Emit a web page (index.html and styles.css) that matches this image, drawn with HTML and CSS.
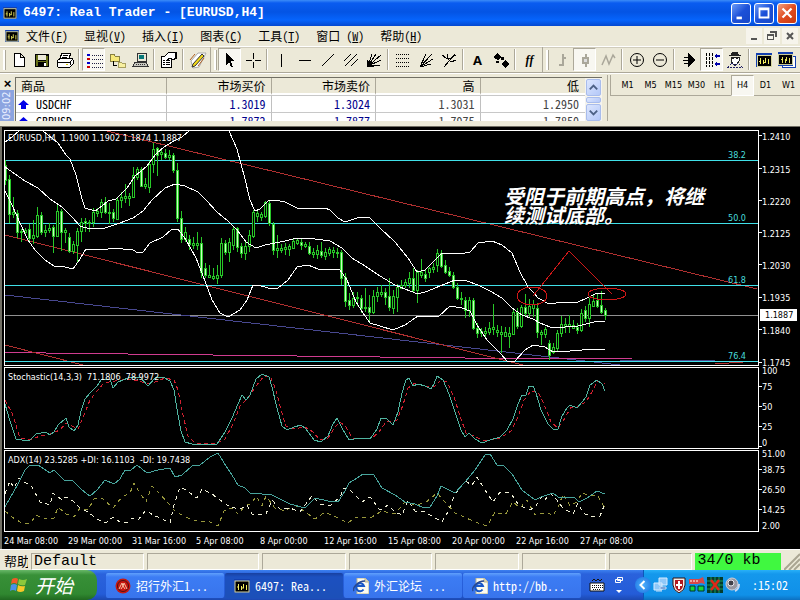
FILE: index.html
```html
<!DOCTYPE html>
<html lang="zh-CN">
<head>
<meta charset="utf-8">
<title>6497: Real Trader - [EURUSD,H4]</title>
<link rel="stylesheet" href="styles.css">
</head>
<body>
<svg class="defs" aria-hidden="true">
  <symbol id="app" viewBox="0 0 16 14"><rect width="16" height="14" fill="#1440b0"/><rect x="1" y="2" width="14" height="11" fill="#000" stroke="#d8d8a0"/><path d="M4.500 5v6M7.500 7v4M9.500 5v4M12.500 6v5M3 8h2M8 9h2" stroke="#f4f060" fill="none"/></symbol>
  <symbol id="ie" viewBox="0 0 16 16"><path d="M4 0h8l4 4v12H4z" fill="#fbfbf0" stroke="#b8b490"/><path d="M12 0v4h4" fill="#ddd8b8" stroke="#b8b490"/><path d="M10.500 11.500A4 4 0 1 1 11 8H4" fill="none" stroke="#1858c8" stroke-width="2"/><path d="M1 13C-1 10 5 3 12 3" fill="none" stroke="#284890" stroke-width="1.500"/></symbol>
</svg>

<header class="titlebar">
  <svg class="appicon"><use href="#app"/></svg>
  <h1>6497: Real Trader - [EURUSD,H4]</h1>
  <button class="winbtn" aria-label="最小化"><svg viewBox="0 0 20 20"><path d="M5 14h6v3H5z" fill="#fff"/></svg></button>
  <button class="winbtn" aria-label="最大化"><svg viewBox="0 0 20 20"><path d="M4 4h12v12H4zM6 7v7h8V7z" fill="#fff" fill-rule="evenodd"/></svg></button>
  <button class="winbtn close" aria-label="关闭"><svg viewBox="0 0 20 20"><path d="M5 5l10 10M15 5L5 15" stroke="#fff" stroke-width="2.500"/></svg></button>
</header>

<nav class="menubar">
  <svg class="appicon"><use href="#app"/></svg>
  <button>文件(<u>F</u>)</button><button>显视(<u>V</u>)</button><button>插入(<u>I</u>)</button><button>图表(<u>C</u>)</button><button>工具(<u>T</u>)</button><button>窗口 (<u>W</u>)</button><button>帮助(<u>H</u>)</button>
  <span class="spring"></span>
  <button class="mdi" aria-label="最小化图表"><svg viewBox="0 0 16 16"><path d="M5 10h6v2H5z" fill="#555"/></svg></button>
  <button class="mdi" aria-label="还原图表"><svg viewBox="0 0 16 16"><path d="M6 3h7v6h-2V5H6zM3 6h7v6H3zM4 8v3h5V8z" fill="#555" fill-rule="evenodd"/></svg></button>
  <button class="mdi" aria-label="关闭图表"><svg viewBox="0 0 16 16"><path d="M5 5l6 6M11 5l-6 6" stroke="#555" stroke-width="2"/></svg></button>
</nav>

<div class="toolbar">
  <div class="group">
    <button aria-label="新建"><svg viewBox="0 0 18 18"><path d="M4.500 2.500h6l4 4v9h-10zM10.500 2.500v4h4" fill="#fff" stroke="#000"/></svg></button>
    <button aria-label="保存"><svg viewBox="0 0 18 18"><path d="M2 3h14v13H2z" fill="#000"/><path d="M3 4h2v11H3zM13 5h2v10h-2z" fill="#667018"/><path d="M5 4h8v5H5z" fill="#ece9d8"/><path d="M5 10h8v1H5z" fill="#667018"/><path d="M11 12h2v3h-2z" fill="#fff"/></svg></button>
    <button aria-label="打印"><svg viewBox="0 0 18 18"><path d="M6 2h9l-2 5H4zM1 10l4-3h11l1 2v4l-3 3H2l-1-2z" fill="#fff" stroke="#000"/><path d="M7 4h5M6 6h5M1 11h13v3M14 11l3-3" fill="none" stroke="#000"/><path d="M10 13h2v1h-2z" fill="#d0c000"/></svg></button>
    <i class="sep"></i>
    <button class="on" aria-label="市场报价"><svg viewBox="0 0 18 18"><path d="M7 4.500h11M7 8.500h11M7 12.500h11M7 16.500h11" stroke="#224" stroke-dasharray="1 1"/><path d="M2 3h3v2H2zM2 11h3v2H2z" fill="#00c"/><path d="M2 7h3v2H2zM2 15h3v2H2z" fill="#c00"/></svg></button>
    <button aria-label="导航"><svg viewBox="0 0 18 18"><path d="M2 3h4l1 2h4v5H2z" fill="#f6e878" stroke="#888040"/><path d="M10 11h3l1 1h3v4h-7z" fill="#f8f0a0" stroke="#a8a060"/><path d="M5 10v4h4" stroke="#000" fill="none"/></svg></button>
    <button aria-label="终端"><svg viewBox="0 0 18 18"><path d="M6 2h9v8H6z" fill="#ece9d8" stroke="#333"/><path d="M8 4h5v4H8z" fill="#087878"/><path d="M4 11h11l2 4H2z" fill="#c8c8c0" stroke="#333"/><path d="M5 13h9" stroke="#333" stroke-dasharray="1 1"/></svg></button>
    <i class="sep"></i>
    <button aria-label="新订单"><svg viewBox="0 0 18 18"><path d="M1.500 5.500h10v11h-10z" fill="#fff" stroke="#000"/><path d="M3 9h2M6 9h4M3 11h2M6 11h4M3 13h2M6 13h4" stroke="#000"/><path d="M5 5l4-4h3l4 1v5l-3 2-3-2-3 2" fill="#fff" stroke="#000"/><path d="M16 1v7" stroke="#000" stroke-width="2"/></svg></button>
    <i class="sep"></i>
    <button aria-label="编辑器"><svg viewBox="0 0 18 18" class="smooth"><path d="M2 10L9 2h8l-7 14-6 1z" fill="#fff" stroke="#aaa"/><path d="M4 13l9-10 2 2-9 10-3 1z" fill="#f0d818" stroke="#333"/><path d="M9 15l6-8M1 9l5-6" stroke="#b06020"/></svg></button>
  </div>
  <div class="group">
    <button class="on" aria-label="光标"><svg viewBox="0 0 18 18"><path d="M5 2v12l3-3 2 5h2l-2-6h4z" fill="#000"/></svg></button>
    <button aria-label="十字线"><svg viewBox="0 0 18 18"><path d="M9.500 2v6M9.500 11v6M2 9.500h6M11 9.500h6" stroke="#000"/></svg></button>
    <i class="sep"></i>
    <button aria-label="垂直线"><svg viewBox="0 0 18 18"><path d="M8.500 3v13" stroke="#000"/></svg></button>
    <button aria-label="水平线"><svg viewBox="0 0 18 18"><path d="M3 9.500h12" stroke="#000"/></svg></button>
    <button aria-label="趋势线"><svg viewBox="0 0 18 18"><path d="M3 15L15 3" stroke="#000"/></svg></button>
    <button aria-label="通道"><svg viewBox="0 0 18 18"><path d="M2 10l7-7M3 15L15 3M9 15l7-7" stroke="#000"/></svg></button>
    <button aria-label="扇形线"><svg viewBox="0 0 18 18"><path d="M3 15L7 3M3 15l8-12M3 15L16 4M3 15l13-6M3 15l12-1" stroke="#000"/><path d="M2 9v7h7z" fill="#000"/></svg></button>
    <i class="sep"></i>
    <button aria-label="斐波纳契"><svg viewBox="0 0 18 18"><path d="M2 3.500h14M2 7.500h14M2 11.500h14M2 15.500h14" stroke="#000" stroke-dasharray="1 1"/></svg></button>
    <button aria-label="斐波扇"><svg viewBox="0 0 18 18"><path d="M3 16L9 3M3 16L15 3M3 16l13-8M3 16l11-3" fill="none" stroke="#000"/></svg></button>
    <button aria-label="音叉线"><svg viewBox="0 0 18 18"><path d="M4 16L15 3M2 4l4 3 5 0 5-3M7 3l0 4 4 4 5-2" fill="none" stroke="#000"/></svg></button>
    <i class="sep"></i>
    <button class="letter">A</button>
    <button aria-label="箭头"><svg viewBox="0 0 18 18"><path d="M5 2l4 4-3 3-5-3zM13 9l4 4-4 4-4-4zM9 6h3v3H9zM4 10h3v2H4z" fill="#000"/></svg></button>
    <i class="sep"></i>
    <button class="func">ff</button>
  </div>
  <div class="group">
    <button aria-label="柱状图"><svg viewBox="0 0 18 18"><path d="M9.500 3v12M6 13.500h3M10 6.500h3" stroke="#aaa79a" stroke-width="2"/></svg></button>
    <button class="on" aria-label="蜡烛图"><svg viewBox="0 0 18 18"><path d="M9.500 3v13" stroke="#aaa79a" stroke-width="2"/><path d="M7 7h5v5H7z" fill="#ddd" stroke="#aaa79a" stroke-width="2"/></svg></button>
    <button aria-label="折线图"><svg viewBox="0 0 18 18" class="smooth"><path d="M3 14L7 5l3 8 4-9 2 3" fill="none" stroke="#aaa79a" stroke-width="1.500"/></svg></button>
    <i class="sep"></i>
    <button aria-label="放大"><svg viewBox="0 0 18 18" class="smooth"><circle cx="9" cy="9" r="6.500" fill="none" stroke="#000"/><path d="M5 9h8M9 5v8" stroke="#000"/></svg></button>
    <button aria-label="缩小"><svg viewBox="0 0 18 18" class="smooth"><circle cx="9" cy="9" r="6.500" fill="none" stroke="#000"/><path d="M5 9h8" stroke="#000"/></svg></button>
    <i class="sep"></i>
    <button aria-label="自动滚动"><svg viewBox="0 0 18 18"><path d="M8 2l7 7-7 7z" fill="#000"/><path d="M4 6.500h5M3 9.500h6M4 12.500h5" stroke="#000"/></svg></button>
    <button class="on" aria-label="图表平移"><svg viewBox="0 0 18 18"><path d="M3.500 2v14M6.500 2v14M9.500 2v14" stroke="#000" stroke-dasharray="3 1"/><path d="M11 5l3-3v2h3v2h-3v2zM11 13l3-3v2h3v2h-3v2z" fill="#00a"/></svg></button>
    <button aria-label="智能交易"><svg viewBox="0 0 18 18"><path d="M5 4l1-3h6l1 3h2v1H3V4z" fill="#222"/><path d="M5 6h8v4l-2 3H7l-2-3z" fill="#fff" stroke="#222"/><path d="M6 7h2M10 7h2" stroke="#222"/><path d="M2 16l4-4 3 3 3-3 4 4z" fill="none" stroke="#226" stroke-dasharray="2 1"/></svg></button>
    <i class="sep"></i>
    <button aria-label="新图表"><svg viewBox="0 0 18 18"><use href="#app" x="1" y="2" width="16" height="14"/></svg></button>
    <button aria-label="图表窗口"><svg viewBox="0 0 18 18"><path d="M4 5h13v11H4z" fill="#fff" stroke="#1440b0"/><use href="#app" x="0" y="1" width="15" height="14"/></svg></button>
  </div>
</div>

<section class="dock">
  <div class="grip-col"><button aria-label="关闭市场报价">×</button><span>09:02</span></div>
  <div class="quotes">
    <table>
      <colgroup><col class="c-name"><col><col><col><col></colgroup>
      <thead><tr><th>商品</th><th>市场买价</th><th>市场卖价</th><th>高</th><th>低</th></tr></thead>
      <tbody>
        <tr><td><svg class="up" viewBox="0 0 11 9"><path d="M5.500 0L11 5H8v4H3V5H0z"/></svg>USDCHF</td><td class="q">1.3019</td><td class="q">1.3024</td><td>1.3031</td><td>1.2950</td></tr>
        <tr><td><svg class="up" viewBox="0 0 11 9"><path d="M5.500 0L11 5H8v4H3V5H0z"/></svg>GBPUSD</td><td class="q">1.7872</td><td class="q">1.7877</td><td>1.7975</td><td>1.7850</td></tr>
      </tbody>
    </table>
  </div>
  <div class="scroll">
    <button aria-label="向上"><svg viewBox="0 0 14 14"><path d="M3 9l4-4 4 4" /></svg></button>
    <i></i>
    <button aria-label="向下"><svg viewBox="0 0 14 14"><path d="M3 5l4 4 4-4" /></svg></button>
  </div>
  <div class="periods">
    <div class="period-row"><button>M1</button><button>M5</button><button>M15</button><button>M30</button><button>H1</button><button class="on">H4</button><button>D1</button><button>W1</button></div>
  </div>
</section>

<main class="chart">
  <div class="pane price">
    <svg class="plot"><g transform="translate(-5 -131)" fill="none">
      <path d="M5 315.500H3000" stroke="#909090"/>
      <path d="M5 295L620 365M620 360.500H715" stroke="#484890"/>
      <path d="M5 352.500H46M46 353.500H128M128 354.500H213M213 355.500H297M297 356.500H380M380 357.500H465M465 358.500H632" stroke="#d03c90"/>
      <path d="M107 131L757 289M5 235L523 365M5 345L83 365M715 364L757 361" stroke="#b03030"/>
      <g class="fib"><rect x="5" y="160" width="3000" height="1"/><rect x="5" y="223" width="3000" height="1"/><rect x="5" y="285" width="3000" height="1"/><rect x="5" y="361" width="3000" height="1"/></g>
      <g id="candles" class="candles"></g>
      <g stroke="#fff">
        <polyline points="5,142 12,137 19,131"/>
        <polyline points="43,131 58,143 66,155 70,159 76,175 82,199 85,208 95,211 102,206 108,201 116,199 127,188 135,176 147,166 156,154 164,147 172,142 182,137 189,131"/>
        <polyline points="229,131 237,149 245,179 250,200 255,211 260,209 268,201 275,200 285,202 297,208 313,209 325,208 330,210 338,218 345,222 357,218 369,217 380,228 395,242 408,258 417,272 425,270 437,258 442,253 465,253 470,252 478,243 492,241 502,245 512,253 520,272 528,287 534,293 538,298 549,304 563,302 578,302 587,298 597,293 605,294"/>
        <polyline points="5,167 15,174 25,181 38,188 50,199 62,207 72,217 80,226 90,229 105,228 120,223 133,218 143,211 152,200 165,188 175,184 185,186 198,192 207,201 217,212 228,221 238,231 246,242 256,248 265,245 275,243 285,241 297,238 315,239 330,241 342,248 352,258 365,266 380,276 395,285 410,291 418,294 428,291 440,286 455,280 467,281 478,285 490,291 502,298 512,308 522,315 533,319 540,323 550,327 565,327 578,326 590,323 598,321 605,322"/>
        <polyline points="5,191 12,205 20,223 28,240 35,250 45,260 54,266 65,267 73,269 80,259 86,249 95,249 103,250 113,248 123,249 133,250 138,253 143,252 150,243 163,237 172,229 178,229 186,240 196,258 205,281 212,300 220,313 228,317 240,310 247,300 253,285 258,285 268,288 278,288 288,280 297,267 308,265 318,269 340,270 347,280 356,302 363,313 370,323 380,326 393,330 405,325 418,316 430,316 438,317 450,306 462,308 470,311 477,325 487,340 500,353 508,362 515,361 525,350 533,345 545,347 553,352 570,351 582,350 590,349 605,349"/>
      </g>
      <g stroke="#d01818"><ellipse cx="532" cy="296" rx="15" ry="9"/><ellipse cx="607" cy="294" rx="19" ry="6"/><path d="M533 296L569 251L612 294"/></g>
      <g class="lbl"><text x="8" y="141" xml:space="preserve">EURUSD,H4  1.1900 1.1902 1.1874 1.1887</text></g>
      <g class="lbl cyan"><text x="728" y="158">38.2</text><text x="728" y="221">50.0</text><text x="728" y="283">61.8</text><text x="728" y="359">76.4</text></g>
      <g class="note"><text x="504" y="204">受阻于前期高点<tspan class="mid">，</tspan>将继</text><text x="504" y="223">续测试底部<tspan class="mid">。</tspan></text></g>
    </g></svg>
    <svg class="axis"><path d="M0 5.500h3M0 38.500h3M0 70.500h3M0 102.500h3M0 134.500h3M0 167.500h3M0 199.500h3M0 232.500h3" stroke="#fff"/>
      <g class="lbl"><text x="3" y="10">1.2410</text><text x="3" y="43">1.2315</text><text x="3" y="75">1.2220</text><text x="3" y="107">1.2125</text><text x="3" y="139">1.2030</text><text x="3" y="171">1.1935</text><text x="3" y="204">1.1840</text><text x="3" y="236">1.1745</text></g>
      <rect x="1" y="179" width="37" height="12" fill="#fff"/><text class="tag" x="6" y="188">1.1887</text></svg>
  </div>
  <div class="pane">
    <svg class="plot"><g transform="translate(-5 -368)" fill="none">
      <polyline stroke="#d02030" stroke-dasharray="4 3" points="5,400 12,413 20,438 30,440 40,436 50,434 60,430 66,423 72,426 78,429 84,415 90,400 98,390 104,383 115,381 130,379 150,384 165,378 174,380 178,390 183,415 188,436 195,443 215,444 225,439 233,424 240,406 248,398 256,386 264,376 270,376 276,390 281,410 286,426 293,429 305,427 313,432 320,440 328,438 335,427 340,422 346,427 352,438 372,438 379,432 386,422 397,420 403,405 408,388 415,383 425,386 434,387 441,380 447,382 454,397 460,416 466,433 474,436 484,441 500,438 511,431 518,417 524,400 531,391 538,392 544,404 551,422 558,428 565,418 571,407 577,407 586,402 593,390 598,381 605,384"/>
      <polyline stroke="#50b4a0" points="5,404 10,421 16,439 22,440 30,440 36,434 46,432 50,435 54,432 58,425 66,418 69,427 74,431 78,425 81,411 85,399 90,393 97,386 101,380 110,379 113,388 118,382 128,378 140,377 148,386 155,378 163,377 170,381 174,390 177,409 181,431 185,442 192,444 217,444 225,432 232,418 238,404 242,395 246,400 250,395 256,379 262,374 269,377 272,387 277,408 282,426 287,430 294,427 301,425 306,429 314,440 321,442 328,436 333,424 337,418 342,428 349,440 360,438 370,439 377,429 381,418 387,419 393,425 398,412 402,393 406,380 409,378 413,386 418,384 425,386 431,389 434,384 437,376 443,380 449,394 455,412 461,430 465,437 469,433 475,439 482,443 490,440 500,437 507,430 513,419 518,404 522,395 526,395 529,386 533,386 536,393 541,410 548,424 554,430 558,429 562,416 567,408 570,405 577,408 582,402 586,397 590,385 597,380 602,384 605,391"/>
      <g class="lbl"><text x="8" y="380" xml:space="preserve">Stochastic(14,3,3)  71.1806  78.9972</text></g>
    </g></svg>
    <svg class="axis"><path d="M0 19.500h3M0 39.500h3M0 59.500h3M0 79.500h3" stroke="#fff"/><g class="lbl"><text x="3" y="7">100</text><text x="3" y="23">75</text><text x="3" y="43">50</text><text x="3" y="63">25</text><text x="3" y="79">0</text></g></svg>
  </div>
  <div class="pane">
    <svg class="plot"><g transform="translate(-5 -451)" fill="none">
      <polyline stroke="#98983c" stroke-dasharray="4 4" points="5,511 12,517 20,522 30,524 36,515 45,519 54,518 58,507 66,514 74,517 80,508 88,510 94,499 102,498 113,508 122,497 130,493 134,483 140,493 146,502 152,486 158,492 168,503 175,511 185,517 200,522 208,521 218,526 224,511 232,508 238,514 245,506 252,503 256,496 262,506 266,496 275,508 285,511 295,505 304,511 315,519 325,512 338,518 348,523 355,517 370,518 382,511 395,514 405,502 415,505 425,503 437,493 446,503 455,513 466,518 478,523 487,526 495,512 505,515 513,502 520,508 527,500 535,515 541,513 548,513 553,516 559,505 563,494 570,506 577,502 582,493 590,496 597,495 605,508"/>
      <polyline stroke="#f0f0d8" stroke-dasharray="4 4" points="5,494 10,481 14,488 19,478 26,483 31,485 40,502 50,505 53,493 62,500 66,497 73,501 80,508 88,512 97,519 106,523 113,517 120,522 127,523 132,518 138,520 146,510 153,515 160,518 170,523 174,505 180,487 186,490 197,498 202,489 212,494 220,500 230,507 240,509 247,505 252,514 258,514 266,514 272,500 280,509 290,508 300,512 312,496 320,504 330,506 340,497 344,488 350,490 362,502 370,497 380,510 388,505 395,512 402,515 408,500 415,511 425,512 435,518 442,522 449,510 455,494 465,481 472,485 477,477 485,490 493,502 500,492 510,492 518,504 528,510 535,508 541,497 545,500 550,493 557,500 563,508 573,514 578,503 583,513 590,516 600,516 604,506"/>
      <polyline stroke="#48a49c" points="5,507 10,498 18,484 25,470 30,465 38,465 50,473 54,470 64,480 73,481 82,490 90,496 97,490 105,480 114,484 120,479 125,470 130,471 137,465 147,473 158,470 170,468 175,477 182,475 192,466 200,465 210,457 218,453 226,466 232,475 238,485 245,488 250,493 262,494 270,494 278,498 290,504 305,508 315,498 328,501 338,502 345,491 349,483 357,478 363,474 374,475 382,488 395,495 405,502 415,504 424,508 430,507 437,496 441,486 455,493 465,482 475,470 485,455 490,454 497,465 503,465 512,474 522,490 535,500 541,497 547,495 553,493 558,497 570,497 575,498 579,502 587,498 597,491 605,494"/>
      <g class="lbl"><text x="8" y="463" xml:space="preserve">ADX(14) 23.5285 +DI: 16.1103  -DI: 19.7438</text></g>
    </g></svg>
    <svg class="axis"><path d="M0 19.500h3M0 39.500h3M0 59.500h3" stroke="#fff"/><g class="lbl"><text x="3" y="7">51.00</text><text x="3" y="23">38.75</text><text x="3" y="43">26.50</text><text x="3" y="63">14.25</text><text x="3" y="79">2.00</text></g></svg>
  </div>
  <ol class="dates"><li>24 Mar 08:00</li><li>29 Mar 00:00</li><li>31 Mar 16:00</li><li>5 Apr 08:00</li><li>8 Apr 00:00</li><li>12 Apr 16:00</li><li>15 Apr 08:00</li><li>20 Apr 00:00</li><li>22 Apr 16:00</li><li>27 Apr 08:00</li></ol>
</main>

<footer class="status">
  <span class="help">帮助</span><span class="cell wide">Default</span><span class="cell wide"></span><span class="cell"></span><span class="cell"></span><span class="cell"></span><span class="cell"></span><span class="cell"></span><span class="traffic">34/0 kb</span>
  <svg class="sizer" viewBox="0 0 16 18"><path d="M0 18L16 2M5 18L16 7M10 18l6-6" stroke="#aaa692" stroke-width="2"/></svg>
</footer>

<div class="taskbar">
  <button class="start"><svg viewBox="0 0 18 18"><path d="M2 3q4-2 6 0L7 8Q4 6 1 8z" fill="#f05a28"/><path d="M9 3q4 2 8 0l-2 6q-4 1-7-1z" fill="#8cc83c"/><path d="M1 9q3-2 6 0l-1 6q-3-2-6 0z" fill="#4a90e8"/><path d="M8 9q3 2 7 1l-1 5q-4 2-7 0z" fill="#f8c828"/></svg>开始</button>
  <button class="task"><svg viewBox="0 0 16 16"><circle cx="8" cy="8" r="7.500" fill="#c81810"/><circle cx="8" cy="8" r="5.500" fill="none" stroke="#501010"/><path d="M4 11l3-6 1 3 1-3 3 6M6 11l2-3 2 3" fill="none" stroke="#f8c0a0"/></svg>招行外汇1...</button>
  <button class="task active"><svg viewBox="0 0 16 16"><use href="#app" y="1" width="16" height="14"/></svg>6497: Rea...</button>
  <button class="task"><svg viewBox="0 0 16 16"><use href="#ie" width="16" height="16"/></svg>外汇论坛 ...</button>
  <button class="task"><svg viewBox="0 0 16 16"><use href="#ie" width="16" height="16"/></svg>http://bb...</button>
  <div class="lang">
    <svg viewBox="0 0 16 16"><path d="M1 6h14v8H1z" fill="#fff" stroke="#111"/><path d="M3 8.500h11M3 10.500h11M4 12.500h8" stroke="#111" stroke-dasharray="1 1"/><path d="M3 4l2-2 2 2 2-2 2 2 2-2" fill="none" stroke="#111"/></svg>
    <svg viewBox="0 0 10 18"><path d="M3.500 1.500h5v3h-5zM1.500 3.500h5v3h-5z" fill="#2a60d8" stroke="#fff"/><path d="M2 14h6l-3 3z" fill="#fff"/></svg>
  </div>
  <div class="tray">
    <button class="expand" aria-label="显示隐藏图标"><svg viewBox="0 0 16 16"><path d="M9.500 4l-4 4 4 4" fill="none" stroke="#fff" stroke-width="2"/></svg></button>
    <svg viewBox="0 0 16 16"><path d="M6 1h8v7H6zM1 6h8v7H1z" fill="#90c8f8" stroke="#d8ecff"/><path d="M7 10h6v2H7zM3 14h6" fill="#3868b8" stroke="#c8e0f8"/></svg>
    <svg viewBox="0 0 16 16"><path d="M2 1h12v7q0 5-6 8-6-3-6-8z" fill="#f4ece4" stroke="#301010"/><path d="M4 3h8v5q0 4-4 6-4-2-4-6z" fill="#b01820"/><path d="M7 4h2v3h2v2H9v3H7V9H5V7h2z" fill="#fff"/></svg>
    <svg viewBox="0 0 16 16"><path d="M0 2h10l4-2 2 7-4-1-3 1H0z" fill="#d84848"/><path d="M1 4h8" stroke="#fff" stroke-dasharray="2 1"/><path d="M1 9h5v5H1zM9 9h6v5H9z" fill="#18d838" stroke="#033"/></svg>
    <svg viewBox="0 0 16 16"><path d="M0 0h16v16H0z" fill="#043c2c"/><path d="M0 4h16M0 8h16M0 12h16M4 0v16M8 0v16M12 0v16" stroke="#18985c"/><path d="M4 3l8 10M12 3L4 13" stroke="#e02818" stroke-width="2.500"/></svg>
    <svg viewBox="0 0 16 16"><circle cx="7" cy="7" r="6" fill="#9898a0" stroke="#d0d0d8"/><circle cx="6" cy="6" r="3" fill="#404048" stroke="#e8e8f0"/><path d="M10 14q4-2 4-7" fill="none" stroke="#c8d8f0" stroke-width="2"/></svg>
    <time>:15:02</time>
  </div>
</div>
<script src="chart.js"></script>
</body>
</html>
```
FILE: styles.css
```css
* { box-sizing: border-box; }
:root {
  --face: #ece9d8;
  --line: #aca899;
  --song: "Noto Sans Mono CJK SC", "Liberation Mono", "Noto Sans CJK SC", monospace;
  --small: "DejaVu Sans Condensed", "Open Sans", sans-serif;
}
body {
  margin: 0;
  min-height: 100vh;
  display: flex;
  flex-direction: column;
  background: var(--face);
  font: 12px/16px var(--song);
  color: #000;
  overflow: hidden;
}
button { margin: 0; padding: 0; border: 0; background: none; font: inherit; color: inherit; }
svg { display: block; flex: none; }
.defs { position: absolute; width: 0; height: 0; }
.appicon { width: 14px; height: 12px; }

.titlebar {
  display: flex; align-items: center; gap: 3px; height: 26px; padding: 0 3px;
  background: linear-gradient(#3c8cf8 0, #0a5cf0 3px, #0454e4 12px, #0664fc 20px, #0448d0 26px);
}
.titlebar h1 { flex: 1; margin: 0 0 0 3px; font: bold 13px/20px "Liberation Mono", monospace; color: #fff; white-space: pre; }
.winbtn {
  width: 20px; height: 21px; border: 1px solid #fff; border-radius: 3px;
  background: linear-gradient(135deg, #6c9cf8, #1c50d8 50%, #1848c8);
}
.winbtn svg { width: 18px; height: 18px; }
.winbtn.close { background: linear-gradient(135deg, #f0a080, #e04c20 50%, #c83810); }

.menubar { display: flex; align-items: center; height: 20px; padding: 0 2px 0 5px; }
.menubar button { padding: 0 9px 0 7px; line-height: 14px; white-space: pre; }
.menubar .spring { flex: 1; }
.menubar .mdi { padding: 0; margin-left: 2px; width: 16px; height: 16px; background: #f6f4ec; }

.toolbar { display: flex; height: 27px; border-top: 1px solid #fff; border-bottom: 1px solid var(--line); box-shadow: inset 0 1px 0 #d0ccbc; }
.group { display: flex; align-items: center; padding: 0 1px 0 7px; border-right: 1px solid var(--line); position: relative; }
.group::before { content: ""; position: absolute; left: 3px; top: 3px; bottom: 2px; width: 2px; background: #fff; border-right: 1px solid var(--line); }
.group:last-child { border: 0; }
.group button { display: flex; align-items: center; justify-content: center; width: 23px; height: 23px; }
.group svg { width: 18px; height: 18px; shape-rendering: crispEdges; }
.group svg.smooth { shape-rendering: auto; }
.group .on, .periods .on { background: #f8f7f1; border: 1px solid var(--line); border-right-color: #fff; border-bottom-color: #fff; }
.sep { width: 6px; height: 21px; border-left: 2px solid transparent; background: linear-gradient(90deg, var(--line) 1px, #fff 1px, #fff 2px, transparent 2px) padding-box no-repeat; }
.group .letter { font: bold 13px/20px "Open Sans", sans-serif; }
.group .func { font: italic bold 12px/20px "Liberation Serif", serif; }

.dock { display: flex; height: 53px; padding: 1px 0 5px; border-top: 1px solid #fff; }
.grip-col { width: 15px; display: flex; flex-direction: column; padding-top: 3px; }
.grip-col button { height: 12px; font: bold 13px/10px "Liberation Sans", sans-serif; }
.grip-col span { flex: 1; width: 14px; writing-mode: vertical-rl; transform: rotate(180deg); background: #8ca4e0; color: #e8eeff; font: 11px/14px var(--small); text-align: center; }
.quotes { flex: 1; overflow: hidden; margin-top: 2px; background: #fff; border-left: 1px solid #716f64; border-top: 1px solid #716f64; }
table { width: 100%; table-layout: fixed; border-collapse: separate; border-spacing: 0; }
.c-name { width: 151px; }
th, td { height: 17px; padding: 0 5px; font-weight: normal; line-height: 14px; text-align: right; white-space: nowrap; overflow: hidden; }
th:first-child, td:first-child { text-align: left; }
th { background: var(--face); border-right: 1px solid var(--line); border-bottom: 2px solid #fff; }
td { border-right: 1px solid #c0c0c0; border-top: 1px solid #c8c8c8; color: #444; }
td:first-child { color: #000; padding-left: 2px; }
td.q { color: #00008c; }
th:last-child, td:last-child { border-right: 0; padding-right: 6px; }
.up { display: inline-block; width: 11px; height: 9px; margin-right: 7px; fill: #0000e8; }
.scroll { width: 17px; display: flex; flex-direction: column; gap: 1px; margin-top: 2px; padding: 1px 1px 0; background: #f4f3ee; border-top: 1px solid #716f64; }
.scroll button, .scroll i { display: block; background: linear-gradient(135deg, #dce6fe, #b4c8f8); border: 1px solid #a8bcec; border-radius: 2px; }
.scroll button { height: 17px; }
.scroll i { flex: 1; }
.scroll svg { width: 13px; height: 15px; }
.scroll path { fill: none; stroke: #4d6185; stroke-width: 2; }
.periods { margin-left: 5px; padding-left: 2px; width: 193px; border-left: 1px solid var(--line); }
.period-row { display: flex; height: 21px; padding-left: 5px; border-left: 1px solid var(--line); border-bottom: 1px solid var(--line); }
.periods button { width: 23px; height: 21px; font: 9px/15px var(--small); text-align: center; }

.chart { flex: 1; background: #000; border-top: 1px solid #716f64; border-left: 2px solid #716f64; padding: 3px 0 0 2px; display: flex; flex-direction: column; }
.pane { display: flex; height: 82px; margin-bottom: 1px; }
.pane.price { height: 236px; }
.plot { flex: 1; height: 100%; min-width: 0; border: 1px solid #fff; shape-rendering: crispEdges; }
.axis { width: 41px; height: 100%; overflow: visible; }
.fib { fill: #40e0e8; }
.lbl text, .tag { font: 9px/12px var(--small); fill: #fff; }
.lbl.cyan text { fill: #48dcdc; }
.tag { fill: #000; }
.note text { font: italic bold 20px/19px "Noto Sans CJK SC", sans-serif; fill: #fff; }
.note .mid { font-family: "Noto Sans CJK TC", sans-serif; }
.candles path { stroke: #28c828; }
.candles .bull { fill: #000; }
.candles .bear { fill: #c8ffc0; }
.dates { display: flex; margin: 0; padding: 0; list-style: none; height: 16px; color: #fff; font: 9px/17px var(--small); }
.dates li { width: 64px; white-space: nowrap; }

.status { display: flex; align-items: center; gap: 3px; height: 21px; padding: 2px 0 0 4px; border-top: 1px solid #fff; }
.status span { height: 17px; overflow: hidden; white-space: nowrap; }
.help { width: 24px; font-size: 13px; }
.cell { flex: 83 1 0; border: 1px solid #fff; border-top-color: var(--line); border-left-color: var(--line); }
.cell.wide { flex-grow: 113; }
.cell, .traffic { font: 15px/15px "Liberation Mono", monospace; padding-left: 2px; }
.traffic { flex: 87 1 0; background: #40f840; }
.sizer { width: 16px; height: 18px; }

.taskbar { display: flex; align-items: stretch; height: 30px; color: #fff; background: linear-gradient(#3c80f0 0, #2a62dc 4px, #245cd8 24px, #1c48b0 30px); }
.start {
  width: 97px; margin-right: 9px; display: flex; align-items: center; gap: 7px; padding-left: 10px;
  font: italic 19px/24px "Noto Sans CJK SC", sans-serif; border-radius: 0 10px 10px 0;
  background: linear-gradient(#68b868 0, #389038 5px, #308830 24px, #206820 30px);
}
.start svg { width: 18px; height: 18px; }
.task { flex: 0 1 118px; min-width: 0; margin: 3px 1px 2px 0; padding-left: 9px; display: flex; align-items: center; gap: 5px; border-radius: 2px; white-space: pre; overflow: hidden; background: linear-gradient(#60a0fc, #3c7cf4 4px, #3874ec); }
.task.active { background: linear-gradient(#1840a0, #1c50c0 4px, #1c50b8); }
.task svg, .tray svg { width: 16px; height: 16px; }
.lang { flex: 1; display: flex; align-items: center; gap: 9px; padding-left: 7px; }
.lang svg { width: 16px; height: 16px; }
.lang svg + svg { width: 10px; height: 18px; }
.tray { display: flex; align-items: center; gap: 2px; padding-right: 12px; background: linear-gradient(#28b0f8, #1498ec 4px, #1090e8 25px, #0c70c0); border-left: 1px solid #0c58b8; }
.expand { margin-left: -9px; border-radius: 50%; background: radial-gradient(#50b0fc, #1870e0); }
.tray time { margin-left: 9px; }
```
FILE: chart.js
```js
// One entry per bar: high, body top, body bottom, low, 1 = falling bar.
const bars = [
[160,165,180,185,1],[175,179,214,223,1],[197,212,214,218,0],[210,213,232,238,1],[229,231,232,242,0],
[228,230,232,235,0],[224,229,238,242,1],[220,235,238,244,0],[207,215,236,238,0],[212,215,232,235,1],
[225,230,232,237,0],[223,228,230,233,0],[225,227,236,253,1],[203,211,236,237,0],[209,211,232,251,1],
[228,230,232,243,0],[233,237,251,253,1],[241,244,251,254,0],[228,231,245,262,0],[218,222,231,242,0],
[218,221,223,232,1],[220,222,223,232,0],[208,212,222,227,0],[208,211,213,217,0],[199,202,212,218,0],
[197,202,212,214,1],[203,212,213,224,0],[209,212,218,222,1],[198,200,219,220,0],[192,197,200,208,0],
[184,196,198,203,0],[193,196,198,206,0],[167,175,197,198,0],[167,169,177,180,0],[167,169,186,187,1],
[178,184,186,189,0],[161,164,187,193,0],[143,149,164,173,0],[147,148,155,176,1],[149,152,154,160,0],
[149,153,157,159,1],[150,155,157,160,0],[153,155,170,173,1],[163,170,218,222,1],[211,218,239,243,1],
[227,232,239,242,0],[235,239,244,250,1],[237,243,245,249,0],[232,243,245,250,0],[237,243,272,278,1],
[263,268,275,278,1],[265,275,277,278,0],[268,276,278,280,0],[265,275,278,284,0],[238,243,275,278,0],
[240,243,252,255,1],[238,242,252,262,0],[227,229,245,250,0],[227,228,247,252,1],[243,246,253,258,1],
[240,246,253,260,0],[230,235,246,252,0],[210,212,236,238,0],[210,213,216,222,0],[212,214,217,221,0],
[201,202,216,218,0],[201,203,223,226,1],[222,224,250,255,1],[235,248,250,258,0],[244,248,250,253,0],
[243,247,249,255,0],[244,246,249,256,0],[238,241,248,249,0],[238,240,243,245,0],[239,242,245,250,1],
[242,244,246,248,0],[242,246,253,255,1],[248,252,254,258,0],[245,250,254,259,0],[242,251,255,258,1],
[248,252,256,260,0],[247,249,253,256,0],[247,250,252,258,0],[248,252,253,258,0],[250,252,278,285,1],
[273,277,301,307,1],[293,300,305,310,1],[292,298,305,308,0],[292,297,298,306,0],[295,298,308,313,1],
[288,307,308,312,0],[295,307,312,323,1],[290,296,312,314,0],[287,292,296,302,0],[285,292,294,297,0],
[288,292,297,305,1],[278,296,307,311,1],[290,296,308,314,0],[284,287,297,312,0],[280,285,288,288,0],
[279,282,285,288,0],[272,278,283,288,0],[268,278,290,293,1],[270,272,290,303,0],[259,272,275,278,0],
[270,274,278,282,1],[267,268,272,278,0],[263,267,269,273,0],[249,253,265,272,0],[250,253,266,268,1],
[260,265,272,274,1],[267,271,275,277,1],[272,275,287,289,1],[283,287,298,300,1],[292,298,299,305,0],
[297,300,310,318,1],[297,300,310,317,0],[298,300,328,330,1],[323,328,333,338,1],[328,331,333,337,0],
[327,331,333,338,0],[322,328,332,335,0],[304,327,329,335,0],[325,330,332,337,0],[326,332,334,353,0],
[327,332,336,337,0],[327,333,336,348,0],[310,312,334,335,0],[308,312,326,329,1],[305,307,326,328,0],
[294,307,313,317,1],[299,306,313,317,0],[300,304,308,317,0],[303,308,332,338,1],[330,332,334,345,0],
[327,329,334,338,0],[340,343,355,360,1],[343,347,352,354,0],[330,333,348,352,0],[316,324,333,337,0],
[318,324,326,333,0],[315,324,326,333,0],[320,325,328,329,0],[323,327,330,334,1],[309,313,330,332,0],
[306,310,318,322,1],[298,304,318,327,0],[294,301,306,307,0],[294,300,306,308,1],[291,305,312,314,1],
[308,310,315,320,1]
];
const layer = document.getElementById('candles');
function draw(kind, d) {
  const path = document.createElementNS('http://www.w3.org/2000/svg', 'path');
  path.setAttribute('class', kind);
  path.setAttribute('d', d);
  layer.append(path);
}
bars.forEach(([high, top, bottom, low, falling], i) => {
  const x = 5 + 4 * i;
  draw('wick', `M${x + 0.5} ${high}V${low}`);
  draw(falling ? 'bear' : 'bull', `M${x - 0.5} ${top + 0.5}h2V${bottom + 0.5}h-2z`);
});
```
